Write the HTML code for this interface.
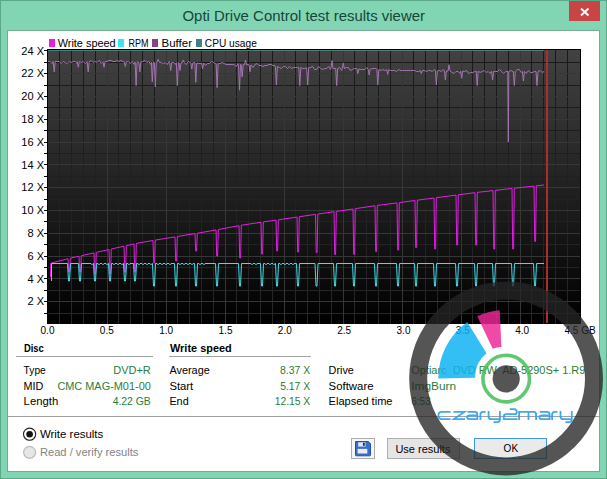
<!DOCTYPE html>
<html><head><meta charset="utf-8"><title>Opti Drive Control test results viewer</title>
<style>
html,body{margin:0;padding:0;width:607px;height:479px;overflow:hidden;background:#82d5b2}
svg{display:block}
text{font-family:'Liberation Sans',sans-serif;white-space:pre}
</style></head><body>
<svg width="607" height="479" viewBox="0 0 607 479">
<defs>
<linearGradient id="bg" x1="0" y1="49" x2="0" y2="324" gradientUnits="userSpaceOnUse">
<stop offset="0" stop-color="#424242"/><stop offset="1" stop-color="#000000"/></linearGradient>
<linearGradient id="gr" x1="0" y1="49" x2="0" y2="324" gradientUnits="userSpaceOnUse">
<stop offset="0" stop-color="#191919"/><stop offset="1" stop-color="#272727"/></linearGradient>
<linearGradient id="pk" x1="0" y1="310" x2="0" y2="349" gradientUnits="userSpaceOnUse">
<stop offset="0" stop-color="#e62692"/><stop offset="1" stop-color="#e62692"/></linearGradient>
</defs>

<rect x="0.5" y="0.5" width="606" height="478" fill="#82d5b2" stroke="#5aa888" stroke-width="1"/>
<rect x="7.5" y="30.5" width="592" height="441" fill="#ffffff" stroke="#78a896" stroke-width="1"/>
<text x="182.5" y="20.8" font-size="15" fill="#15463a" textLength="242.5" lengthAdjust="spacingAndGlyphs">Opti Drive Control test results viewer</text>
<rect x="569" y="1" width="31" height="20" fill="#c94545"/>
<path d="M581 8.5 L588.5 15.5 M588.5 8.5 L581 15.5" stroke="#ffffff" stroke-width="1.9" fill="none"/>
<rect x="47" y="49" width="534" height="275" fill="#000"/>
<rect x="48" y="50" width="532" height="274" fill="url(#bg)"/>
<path d="M59.5 50V324M71.5 50V324M83.5 50V324M95.5 50V324M118.5 50V324M130.5 50V324M142.5 50V324M154.5 50V324M177.5 50V324M189.5 50V324M201.5 50V324M213.5 50V324M236.5 50V324M248.5 50V324M260.5 50V324M272.5 50V324M295.5 50V324M307.5 50V324M319.5 50V324M331.5 50V324M354.5 50V324M366.5 50V324M378.5 50V324M390.5 50V324M413.5 50V324M425.5 50V324M437.5 50V324M449.5 50V324M472.5 50V324M484.5 50V324M496.5 50V324M508.5 50V324M531.5 50V324M543.5 50V324M555.5 50V324M567.5 50V324M48 62.5H580M48 85.5H580M48 107.5H580M48 130.5H580M48 153.5H580M48 176.5H580M48 199.5H580M48 221.5H580M48 244.5H580M48 267.5H580M48 290.5H580M48 313.5H580" stroke="url(#gr)" stroke-width="1" fill="none" shape-rendering="crispEdges"/>
<path d="M107.5 50V324M166.5 50V324M225.5 50V324M284.5 50V324M343.5 50V324M402.5 50V324M461.5 50V324M520.5 50V324M48 73.5H580M48 96.5H580M48 119.5H580M48 142.5H580M48 164.5H580M48 187.5H580M48 210.5H580M48 233.5H580M48 256.5H580M48 278.5H580M48 301.5H580" stroke="#363636" stroke-width="1" fill="none" shape-rendering="crispEdges"/>
<rect x="580" y="49" width="1" height="275" fill="#000"/>
<path d="M44 313.5H47M44 301.5H47M44 290.5H47M44 278.5H47M44 267.5H47M44 256.5H47M44 244.5H47M44 233.5H47M44 221.5H47M44 210.5H47M44 199.5H47M44 187.5H47M44 176.5H47M44 164.5H47M44 153.5H47M44 142.5H47M44 130.5H47M44 119.5H47M44 107.5H47M44 96.5H47M44 85.5H47M44 73.5H47M44 62.5H47M44 50.5H47" stroke="#000" stroke-width="1" fill="none" shape-rendering="crispEdges"/>
<text x="44" y="305.3" font-size="11" text-anchor="end" fill="#000">2 X</text>
<text x="44" y="282.5" font-size="11" text-anchor="end" fill="#000">4 X</text>
<text x="44" y="259.7" font-size="11" text-anchor="end" fill="#000">6 X</text>
<text x="44" y="236.9" font-size="11" text-anchor="end" fill="#000">8 X</text>
<text x="44" y="214.1" font-size="11" text-anchor="end" fill="#000">10 X</text>
<text x="44" y="191.3" font-size="11" text-anchor="end" fill="#000">12 X</text>
<text x="44" y="168.5" font-size="11" text-anchor="end" fill="#000">14 X</text>
<text x="44" y="145.7" font-size="11" text-anchor="end" fill="#000">16 X</text>
<text x="44" y="122.9" font-size="11" text-anchor="end" fill="#000">18 X</text>
<text x="44" y="100.1" font-size="11" text-anchor="end" fill="#000">20 X</text>
<text x="44" y="77.3" font-size="11" text-anchor="end" fill="#000">22 X</text>
<text x="44" y="54.5" font-size="11" text-anchor="end" fill="#000">24 X</text>
<text x="47.5" y="333.5" font-size="10" text-anchor="middle" fill="#000">0.0</text>
<text x="106.8" y="333.5" font-size="10" text-anchor="middle" fill="#000">0.5</text>
<text x="166.2" y="333.5" font-size="10" text-anchor="middle" fill="#000">1.0</text>
<text x="225.5" y="333.5" font-size="10" text-anchor="middle" fill="#000">1.5</text>
<text x="284.8" y="333.5" font-size="10" text-anchor="middle" fill="#000">2.0</text>
<text x="344.2" y="333.5" font-size="10" text-anchor="middle" fill="#000">2.5</text>
<text x="403.5" y="333.5" font-size="10" text-anchor="middle" fill="#000">3.0</text>
<text x="462.8" y="333.5" font-size="10" text-anchor="middle" fill="#000">3.5</text>
<text x="522.2" y="333.5" font-size="10" text-anchor="middle" fill="#000">4.0</text>
<text x="564.5" y="333.5" font-size="10" fill="#000">4.5 GB</text>
<rect x="49" y="39" width="6" height="8" fill="#e41ee4"/>
<text x="57.7" y="46.5" font-size="11" fill="#000" textLength="58" lengthAdjust="spacingAndGlyphs">Write speed</text>
<rect x="118" y="39" width="6" height="8" fill="#3ae6ec"/>
<text x="128.4" y="46.5" font-size="11" fill="#000" textLength="20" lengthAdjust="spacingAndGlyphs">RPM</text>
<rect x="152" y="39" width="6" height="8" fill="#844484"/>
<text x="161.5" y="46.5" font-size="11" fill="#000" textLength="30.5" lengthAdjust="spacingAndGlyphs">Buffer</text>
<rect x="196" y="39" width="6" height="8" fill="#408282"/>
<text x="204.8" y="46.5" font-size="11" fill="#000" textLength="52" lengthAdjust="spacingAndGlyphs">CPU usage</text>
<path d="M48 50.5H544" stroke="#4e7a76" stroke-width="1" fill="none"/>
<path d="M48 61.5 L50.0 61.5 L52.0 63.5 L53.2 61.5 L54.2 71.8 L55.2 61.5 L57.2 61.5 L59.2 61.5 L61.2 63.5 L63.2 61.5 L65.2 62.5 L67.2 63.5 L69.2 61.5 L71.2 62.5 L73.2 61.5 L75.2 61.5 L77.2 63.5 L77.3 61.6 L78.3 67.2 L79.3 61.6 L81.3 62.5 L83.3 61.5 L85.3 63.5 L87.2 61.7 L88.2 71.8 L89.2 61.7 L91.2 60.5 L93.2 62.5 L95.2 61.5 L97.2 62.5 L99.2 60.5 L101.2 63.5 L103.0 61.7 L104.0 67.2 L105.0 61.7 L107.0 61.5 L109.0 60.5 L111.0 60.5 L113.0 61.5 L115.0 61.5 L117.0 60.5 L119.0 61.5 L121.0 60.5 L123.0 61.5 L124.3 61.9 L125.3 66.5 L126.3 61.9 L128.3 61.5 L130.3 63.5 L132.3 61.5 L134.3 64.5 L135.1 62.0 L136.1 85.6 L137.1 62.1 L138.8 62.1 L139.8 71.8 L140.8 62.1 L142.8 61.5 L144.8 60.5 L146.8 62.5 L148.8 61.5 L150.8 64.5 L151.3 62.3 L152.3 81.7 L153.3 62.3 L154.3 62.3 L155.3 86.9 L156.3 62.3 L157.2 62.4 L158.2 59.2 L159.2 62.4 L161.2 62.5 L163.2 63.5 L165.2 62.5 L167.2 64.5 L169.2 61.5 L169.7 62.5 L170.7 70.5 L171.7 62.6 L173.7 62.5 L175.7 64.5 L176.3 62.6 L177.3 85.6 L178.3 62.7 L179.0 62.7 L180.0 70.5 L181.0 62.7 L182.3 62.7 L183.3 60 L184.3 62.8 L186.3 64.5 L188.3 61.5 L190.3 62.5 L190.8 62.9 L191.8 69 L192.8 62.9 L194.8 62.5 L194.8 62.9 L195.8 82.3 L196.8 63.0 L198.8 63.5 L200.8 63.5 L201.6 63.1 L202.6 69 L203.6 63.1 L205.6 65.5 L207.6 63.5 L209.6 63.5 L211.6 61.5 L213.6 62.5 L215.6 63.5 L216.1 63.6 L217.1 87.6 L218.1 63.7 L220.1 63.5 L222.1 62.5 L224.1 63.5 L226.1 64.5 L228.1 64.5 L230.1 64.5 L232.1 64.5 L234.1 64.5 L236.1 66.5 L238.1 63.5 L238.5 64.4 L239.5 90.2 L240.5 64.5 L241.2 64.6 L242.2 77 L243.2 64.7 L244.5 64.7 L245.5 60 L246.5 64.8 L248.5 64.5 L249.0 65.0 L250.0 71.8 L251.0 65.0 L253.0 67.5 L255.0 64.5 L257.0 63.5 L259.0 65.5 L261.0 65.5 L263.0 66.5 L265.0 65.5 L267.0 65.5 L269.0 64.5 L271.0 64.5 L273.0 65.5 L275.0 65.5 L275.4 66.3 L276.4 85 L277.4 66.4 L279.4 67.5 L281.4 68.5 L283.4 66.5 L285.4 66.5 L287.4 68.5 L289.4 66.5 L291.4 68.5 L293.4 67.5 L295.4 67.5 L297.4 67.5 L298.8 67.4 L299.8 85.6 L300.8 67.5 L302.8 68.5 L304.8 68.5 L306.7 67.7 L307.7 85 L308.7 67.7 L310.7 67.5 L312.7 66.5 L314.7 69.5 L316.7 69.5 L318.7 66.5 L320.7 68.5 L322.7 69.5 L324.7 68.5 L326.7 68.5 L328.7 66.5 L330.7 69.5 L331.0 68.3 L332.0 60.6 L333.0 68.3 L335.0 68.5 L335.7 68.4 L336.7 85.6 L337.7 68.4 L339.7 67.5 L341.7 70.5 L342.3 68.6 L343.3 63.2 L344.3 68.6 L346.3 67.5 L348.3 67.5 L350.3 70.5 L352.3 69.5 L354.3 68.5 L356.3 68.5 L356.8 68.9 L357.8 73.7 L358.8 69.0 L360.8 69.5 L362.8 69.5 L364.8 69.5 L366.8 67.5 L368.2 69.2 L369.2 75 L370.2 69.3 L372.2 68.5 L374.2 68.5 L376.2 68.5 L376.8 69.4 L377.8 85 L378.8 69.5 L380.8 70.5 L382.8 69.5 L384.8 70.5 L386.7 69.7 L387.7 74.4 L388.7 69.7 L390.7 70.5 L392.7 70.5 L394.7 70.5 L396.7 71.5 L398.7 69.5 L400.7 70.5 L402.7 70.5 L404.7 70.5 L406.7 70.5 L408.7 70.5 L410.7 70.5 L412.7 70.5 L414.7 70.5 L416.7 71.5 L418.7 71.5 L420.3 70.5 L421.3 73.7 L422.3 70.6 L424.3 70.5 L426.3 71.5 L428.3 70.5 L430.3 70.5 L432.3 71.5 L434.3 69.5 L435.4 70.9 L436.4 85 L437.4 70.9 L439.4 70.5 L441.4 71.5 L443.4 69.5 L444.4 71.0 L445.4 80 L446.4 71.0 L448.0 71.0 L449.0 64.7 L450.0 71.0 L452.0 72.5 L454.0 73.5 L456.0 71.5 L458.0 71.5 L460.0 73.5 L460.7 71.1 L461.7 78.3 L462.7 71.1 L464.7 71.5 L466.7 70.5 L468.7 73.5 L470.7 72.5 L472.7 72.5 L474.7 71.5 L476.2 71.2 L477.2 85.5 L478.2 71.2 L480.2 72.5 L482.2 71.5 L484.2 70.5 L486.2 72.5 L488.2 71.5 L490.2 73.5 L491.6 71.2 L492.6 80 L493.6 71.3 L495.6 71.5 L497.6 71.5 L499.6 69.5 L501.6 71.5 L503.6 73.5 L505.6 71.5 L507.8 71.3 L508.3 142 L508.8 71.3 L510.8 70.5 L512.8 71.5 L513.3 71.4 L514.3 85.5 L515.3 71.4 L517.3 69.5 L519.3 69.5 L521.3 72.5 L522.4 71.4 L523.4 81 L524.4 71.4 L526.4 73.5 L528.4 70.5 L530.4 72.5 L532.4 72.5 L534.4 71.5 L536.0 71.5 L537.0 85.5 L538.0 71.5 L540.0 70.5 L542.0 72.5 L544.0 71.5 L544 71.5" stroke="#a474b0" stroke-width="1" fill="none" stroke-linejoin="miter"/>
<path d="M50.5 277 L50.8 263.2 L68.0 258.7 L68.7 272.0 L69.6 272.0 L70.3 258.2 L79.0 256.2 L79.7 272.0 L80.6 272.0 L81.3 255.7 L94.0 252.9 L94.7 274.0 L95.6 274.0 L96.3 252.4 L109.0 249.5 L109.7 274.0 L110.6 274.0 L111.3 249.0 L124.0 246.2 L124.7 272.0 L125.6 272.0 L126.3 245.7 L134.0 243.9 L134.7 272.0 L135.6 272.0 L136.3 243.4 L153.0 240.5 L153.7 263.0 L154.6 263.0 L155.3 240.1 L175.0 236.9 L175.7 261.0 L176.6 261.0 L177.3 236.5 L195.0 233.6 L195.7 251.0 L196.6 251.0 L197.3 233.3 L216.0 229.9 L216.7 256.0 L217.6 256.0 L218.3 229.5 L239.0 225.7 L239.7 258.0 L240.6 258.0 L241.3 225.2 L261.0 222.3 L261.7 254.0 L262.6 254.0 L263.3 221.9 L276.0 220.1 L276.7 251.0 L277.6 251.0 L278.3 219.8 L297.0 217.1 L297.7 252.0 L298.6 252.0 L299.3 216.7 L315.5 214.4 L316.2 252.6 L317.1 252.6 L317.8 214.1 L334.0 211.7 L334.7 254.4 L335.6 254.4 L336.3 211.4 L353.0 209.0 L353.7 254.4 L354.6 254.4 L355.3 208.7 L375.0 205.7 L375.7 251.5 L376.6 251.5 L377.3 205.4 L397.0 202.9 L397.7 250.0 L398.6 250.0 L399.3 202.6 L415.0 200.5 L415.7 247.7 L416.6 247.7 L417.3 200.2 L434.0 198.0 L434.7 249.0 L435.6 249.0 L436.3 197.7 L456.0 195.1 L456.7 245.0 L457.6 245.0 L458.3 194.8 L475.0 192.7 L475.7 245.0 L476.6 245.0 L477.3 192.4 L493.0 190.6 L493.7 249.0 L494.6 249.0 L495.3 190.3 L512.0 188.5 L512.7 249.0 L513.6 249.0 L514.3 188.2 L534.0 186.1 L534.7 241.4 L535.6 241.4 L536.3 185.8 L544 185" stroke="#e020e0" stroke-width="1" fill="none"/>
<path d="M51.5 281 L51.5 263.5 L67.5 263.5 L68.5 281 L69.5 281 L70.5 263.5 L78.5 263.5 L79.5 281 L80.5 281 L81.5 263.5 L91.0 263.5 L92.0 264.8 L93.0 263.5 L93.5 263.5 L94.5 281 L95.5 281 L96.5 263.5 L98.0 263.5 L99.0 264.8 L100.0 263.5 L102.0 263.5 L103.0 264.8 L104.0 263.5 L106.0 263.5 L107.0 264.8 L108.0 263.5 L108.5 263.5 L109.5 281 L110.5 281 L111.5 263.5 L113.0 263.5 L114.0 264.8 L115.0 263.5 L117.0 263.5 L118.0 264.8 L119.0 263.5 L121.0 263.5 L122.0 264.8 L123.0 263.5 L123.5 263.5 L124.5 281 L125.5 281 L126.5 263.5 L128.0 263.5 L129.0 264.8 L130.0 263.5 L133.5 263.5 L134.5 281 L135.5 281 L136.5 263.5 L138.0 263.5 L139.0 264.8 L140.0 263.5 L142.0 263.5 L143.0 264.8 L144.0 263.5 L146.0 263.5 L147.0 264.8 L148.0 263.5 L150.0 263.5 L151.0 264.8 L152.0 263.5 L152.5 263.5 L153.5 286 L154.5 286 L155.5 263.5 L157.0 263.5 L158.0 264.8 L159.0 263.5 L161.0 263.5 L162.0 264.8 L163.0 263.5 L165.0 263.5 L166.0 264.8 L167.0 263.5 L169.0 263.5 L170.0 264.8 L171.0 263.5 L174.5 263.5 L175.5 286 L176.5 286 L177.5 263.5 L179.0 263.5 L180.0 264.8 L181.0 263.5 L183.0 263.5 L184.0 264.8 L185.0 263.5 L187.0 263.5 L188.0 264.8 L189.0 263.5 L191.0 263.5 L192.0 264.8 L193.0 263.5 L194.5 263.5 L195.5 286 L196.5 286 L197.5 263.5 L199.0 263.5 L200.0 264.8 L201.0 263.5 L203.0 263.5 L204.0 264.8 L205.0 263.5 L215.5 263.5 L216.5 286 L217.5 286 L218.5 263.5 L238.5 263.5 L239.5 286 L240.5 286 L241.5 263.5 L251.0 263.5 L252.0 264.8 L253.0 263.5 L255.0 263.5 L256.0 264.8 L257.0 263.5 L260.5 263.5 L261.5 286 L262.5 286 L263.5 263.5 L265.0 263.5 L266.0 264.8 L267.0 263.5 L269.0 263.5 L270.0 264.8 L271.0 263.5 L273.0 263.5 L274.0 264.8 L275.0 263.5 L275.5 263.5 L276.5 286 L277.5 286 L278.5 263.5 L280.0 263.5 L281.0 264.8 L282.0 263.5 L284.0 263.5 L285.0 264.8 L286.0 263.5 L288.0 263.5 L289.0 264.8 L290.0 263.5 L292.0 263.5 L293.0 264.8 L294.0 263.5 L296.5 263.5 L297.5 286 L298.5 286 L299.5 263.5 L315.0 263.5 L316.0 286 L317.0 286 L318.0 263.5 L333.5 263.5 L334.5 286 L335.5 286 L336.5 263.5 L352.5 263.5 L353.5 286 L354.5 286 L355.5 263.5 L374.5 263.5 L375.5 286 L376.5 286 L377.5 263.5 L396.5 263.5 L397.5 286 L398.5 286 L399.5 263.5 L414.5 263.5 L415.5 286 L416.5 286 L417.5 263.5 L433.5 263.5 L434.5 286 L435.5 286 L436.5 263.5 L455.5 263.5 L456.5 286 L457.5 286 L458.5 263.5 L474.5 263.5 L475.5 286 L476.5 286 L477.5 263.5 L492.5 263.5 L493.5 286 L494.5 286 L495.5 263.5 L511.5 263.5 L512.5 286 L513.5 286 L514.5 263.5 L533.5 263.5 L534.5 286 L535.5 286 L536.5 263.5 L544 263.5" stroke="#40e0e8" stroke-width="1" fill="none"/>
<rect x="546" y="50" width="2" height="273" fill="#a8302c"/>
<text x="23.9" y="352.3" font-size="11" fill="#000" text-anchor="start" textLength="19.8" lengthAdjust="spacingAndGlyphs" font-weight="bold">Disc</text>
<rect x="16" y="356" width="137" height="1" fill="#a0a0a0"/>
<text x="170" y="352.3" font-size="11" fill="#000" text-anchor="start" textLength="61.7" lengthAdjust="spacingAndGlyphs" font-weight="bold">Write speed</text>
<rect x="169" y="356" width="142" height="1" fill="#a0a0a0"/>
<text x="23.6" y="374.0" font-size="11" fill="#000" text-anchor="start" textLength="22.2" lengthAdjust="spacingAndGlyphs">Type</text>
<text x="150.8" y="374.0" font-size="11" fill="#2a7d38" text-anchor="end" textLength="37.5" lengthAdjust="spacingAndGlyphs">DVD+R</text>
<text x="23.6" y="389.7" font-size="11" fill="#000" text-anchor="start" textLength="19.8" lengthAdjust="spacingAndGlyphs">MID</text>
<text x="150.8" y="389.7" font-size="11" fill="#2a7d38" text-anchor="end" textLength="93.4" lengthAdjust="spacingAndGlyphs">CMC MAG-M01-00</text>
<text x="23.6" y="405.4" font-size="11" fill="#000" text-anchor="start" textLength="34.6" lengthAdjust="spacingAndGlyphs">Length</text>
<text x="150.8" y="405.4" font-size="11" fill="#2a7d38" text-anchor="end" textLength="38.1" lengthAdjust="spacingAndGlyphs">4.22 GB</text>
<text x="169.4" y="374.0" font-size="11" fill="#000" text-anchor="start" textLength="40.4" lengthAdjust="spacingAndGlyphs">Average</text>
<text x="310.2" y="374.0" font-size="11" fill="#2a7d38" text-anchor="end" textLength="30.2" lengthAdjust="spacingAndGlyphs">8.37 X</text>
<text x="169.4" y="389.7" font-size="11" fill="#000" text-anchor="start" textLength="23.8" lengthAdjust="spacingAndGlyphs">Start</text>
<text x="310.2" y="389.7" font-size="11" fill="#2a7d38" text-anchor="end" textLength="30" lengthAdjust="spacingAndGlyphs">5.17 X</text>
<text x="169.4" y="405.4" font-size="11" fill="#000" text-anchor="start" textLength="19.3" lengthAdjust="spacingAndGlyphs">End</text>
<text x="310.2" y="405.4" font-size="11" fill="#2a7d38" text-anchor="end" textLength="35.5" lengthAdjust="spacingAndGlyphs">12.15 X</text>
<text x="328.6" y="374.0" font-size="11" fill="#000" text-anchor="start" textLength="25.2" lengthAdjust="spacingAndGlyphs">Drive</text>
<text x="411.3" y="374.0" font-size="11" fill="#2a7d38" text-anchor="start" textLength="174" lengthAdjust="spacingAndGlyphs">Optiarc  DVD RW  AD-5290S+ 1.R9</text>
<text x="328.6" y="389.7" font-size="11" fill="#000" text-anchor="start" textLength="45" lengthAdjust="spacingAndGlyphs">Software</text>
<text x="411.3" y="389.7" font-size="11" fill="#2a7d38" text-anchor="start" textLength="44.7" lengthAdjust="spacingAndGlyphs">ImgBurn</text>
<text x="328.6" y="405.4" font-size="11" fill="#000" text-anchor="start" textLength="63.9" lengthAdjust="spacingAndGlyphs">Elapsed time</text>
<text x="411.3" y="405.4" font-size="11" fill="#2a7d38" text-anchor="start" textLength="19.4" lengthAdjust="spacingAndGlyphs">6:53</text>
<rect x="8" y="416" width="591" height="1" fill="#a0a0a0"/>
<circle cx="29.6" cy="434.2" r="6.1" fill="#fff" stroke="#222" stroke-width="1.1"/>
<circle cx="29.6" cy="434.2" r="3.3" fill="#111"/>
<text x="39.9" y="438" font-size="11.5" fill="#000" text-anchor="start" textLength="63.4" lengthAdjust="spacingAndGlyphs">Write results</text>
<circle cx="29.6" cy="452.3" r="6" fill="#e6e6e6" stroke="#bcbcbc" stroke-width="1.2"/>
<text x="39.9" y="456.4" font-size="11.5" fill="#838383" text-anchor="start" textLength="98.5" lengthAdjust="spacingAndGlyphs">Read / verify results</text>
<rect x="351.5" y="438.5" width="23" height="20" fill="#f4f6f8" stroke="#adadad"/>
<path d="M355.5 441.5 h12.8 l2.2 2.2 v11.3 q0 0.8 -0.8 0.8 h-13.4 q-0.8 0 -0.8 -0.8 z" fill="#3d6ec6" stroke="#2a4f98" stroke-width="1"/>
<rect x="358.2" y="442.3" width="7.3" height="4.3" fill="#dde8f6"/>
<rect x="363" y="442.8" width="1.7" height="3" fill="#1a2338"/>
<rect x="357.6" y="448.9" width="9.7" height="4.6" fill="#e8eef8"/>
<rect x="387.5" y="438.5" width="72" height="20" fill="#e5e5e5" stroke="#adadad"/>
<text x="395.4" y="452.5" font-size="11" fill="#000" text-anchor="start" textLength="55" lengthAdjust="spacingAndGlyphs">Use results</text>
<rect x="474.5" y="438.5" width="72" height="20" fill="#eaeaea" stroke="#3c9be0"/>
<text x="503.6" y="452.4" font-size="11" fill="#000" text-anchor="start" textLength="14.5" lengthAdjust="spacingAndGlyphs">OK</text>
<g>
<circle cx="506.1" cy="378.5" r="87.9" fill="none" stroke="rgb(37,37,37)" stroke-opacity="0.78" stroke-width="18"/>
<path d="M467.3 322 A69 69 0 0 0 438.3 378.4 L475.1 377.7 A31 31 0 0 1 486.5 353.2 Z" fill="rgb(12,178,242)" fill-opacity="0.835"/>
<path d="M477.3 316.3 A69 69 0 0 1 499.7 310.2 L501.4 347 A32.5 32.5 0 0 0 492.7 348.8 Z" fill="rgb(237,38,151)" fill-opacity="0.835"/>
<circle cx="506.2" cy="378.6" r="23.3" fill="none" stroke="rgb(68,190,88)" stroke-opacity="0.85" stroke-width="3.6"/>
<circle cx="506.2" cy="378.8" r="13.6" fill="rgb(37,37,37)" fill-opacity="0.78"/>
</g>
<path d="M450.5 411.9H441.9Q438.4 411.9 438.4 415.4V415.6Q438.4 419.1 441.9 419.1H450.5M453.5 411.9H464.5L453.79999999999995 419.1H465.09999999999997M467.5 411.9H474.8Q477.3 411.9 477.3 414.4V419.1H469.8Q467.09999999999997 419.1 467.09999999999997 417.2Q467.09999999999997 415.3 469.8 415.3H477.3M480.4 420V414.6Q480.4 411.9 483.1 411.9H485.7M488.59999999999997 411V416.4Q488.59999999999997 419.1 491.3 419.1H499.9M499.9 411V419.5Q499.9 422.2 497.2 422.2H493.5M509.8 409.2H514Q516.8 409.2 516.8 412V412.2Q516.8 414.2 514.6 414.2H506.5Q503.8 414.2 503.8 416.6V419.1H517.6M519.1 420V411.9H533.6Q536.1 411.9 536.1 414.4V420M528.5 411.9V420M539.8 411.9H547.1Q549.6 411.9 549.6 414.4V419.1H542.1Q539.4 419.1 539.4 417.2Q539.4 415.3 542.1 415.3H549.6M552.1 420V414.6Q552.1 411.9 554.8000000000001 411.9H557.4000000000001M560.5 411V416.4Q560.5 419.1 563.2 419.1H571.8000000000001M571.8000000000001 411V419.5Q571.8000000000001 422.2 569.1 422.2H565.4" stroke="#2a9eea" stroke-opacity="0.9" stroke-width="1.8" fill="none"/>
</svg></body></html>
